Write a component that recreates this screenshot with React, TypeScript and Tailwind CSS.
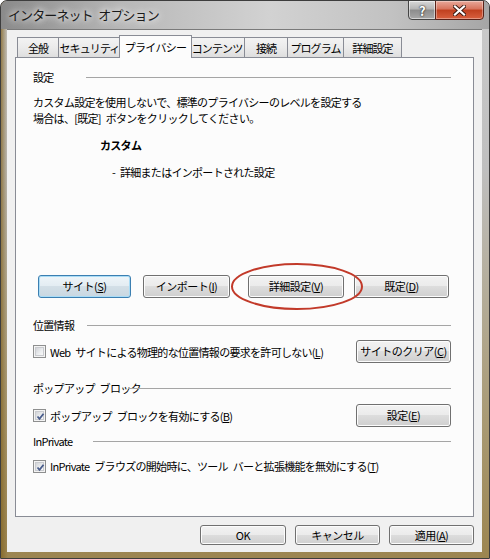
import React from 'react';

const Btn: React.FC<{ w: string; focus?: boolean; h?: string; children: React.ReactNode }> = ({ w, focus, h = 'h-[23px]', children }) => (
  <button
    className={
      focus
        ? `${w} ${h} shrink-0 whitespace-nowrap rounded-[3px] border border-[#3c7fb1] bg-[linear-gradient(180deg,#eef5f9_0%,#e3ecf2_49%,#d3dfe7_50%,#c9d7e1_100%)] shadow-[inset_0_0_0_1px_#a9dcf6] text-[11px] tracking-[-0.5px] text-black leading-none`
        : `${w} ${h} shrink-0 whitespace-nowrap rounded-[3px] border border-[#707070] bg-[linear-gradient(180deg,#f2f2f2_0%,#ebebeb_49%,#dddddd_50%,#cfcfcf_100%)] shadow-[inset_0_0_0_1px_#fcfcfc] text-[11px] tracking-[-0.5px] text-black leading-none`
    }
  >
    {children}
  </button>
);

const Check: React.FC<{ checked?: boolean }> = ({ checked }) => (
  <span className="w-[13px] h-[13px] shrink-0 border border-[#8e8f8f] bg-[#f4f4f4] p-[1px] flex">
    <span className="flex-1 border border-[#c9cbcf] bg-[linear-gradient(135deg,#d2d4d8_0%,#eceef0_60%,#f8f8f8_100%)] relative">
      {checked && (
        <svg width="9" height="9" viewBox="0 0 9 9" className="absolute left-0 top-0">
          <polyline points="1.5,4.5 3.5,6.8 7.5,1.8" fill="none" stroke="#4a5d8c" strokeWidth="1.8" />
        </svg>
      )}
    </span>
  </span>
);

const GroupHead: React.FC<{ label: string; w: string; mt: string }> = ({ label, w, mt }) => (
  <div className={`flex items-center h-[16px] ${mt}`}>
    <span className={`${w} shrink-0 whitespace-nowrap`}>{label}</span>
    <span className="flex-1 h-px bg-[#a5a5a5]" />
  </div>
);

const tabs = [
  { label: '全般', w: 'w-[42px]' },
  { label: 'セキュリティ', w: 'w-[62px]' },
  { label: 'プライバシー', w: 'w-[73px]', active: true },
  { label: 'コンテンツ', w: 'w-[55px]' },
  { label: '接続', w: 'w-[43px]' },
  { label: 'プログラム', w: 'w-[56px]' },
  { label: '詳細設定', w: 'w-[58px]' },
];

// en space keeps the gaps close to the original's width
const SP = '\u2002';

export default function App() {
  return (
    <div className="relative w-[490px] h-[559px] overflow-hidden rounded-t-[7px] border border-[#3d3d3d] flex flex-col font-['Noto_Sans_CJK_JP',sans-serif] text-[11px] tracking-[-0.7px] text-black bg-[linear-gradient(90deg,rgba(130,100,35,0.75)_0px,rgba(130,100,35,0)_7px),linear-gradient(180deg,#a4a4a4_0%,#c9c9c9_4%,#bfbfbf_30%,#a99a74_75%,#9c8550_100%)]">
      {/* title bar */}
      <div className="h-[28px] shrink-0 flex items-start justify-between pl-[7px] pr-[5px] bg-[linear-gradient(90deg,#8a8a8a_0%,#b8b8b8_25%,#d2d2d2_55%,#c2c2c2_80%,#a6a6a6_100%)]">
        <span className="mt-[5px] h-[18px] leading-[18px] text-[13px] tracking-[-0.9px] text-[#1a1a1a] [text-shadow:0_0_6px_#ffffff,0_0_10px_#ffffff]">
          インターネット{SP}オプション
        </span>
        <div className="flex -mt-px">
          <div className="w-[28px] h-[20px] rounded-bl-[4px] border border-[#454545] bg-[linear-gradient(180deg,#d8d8d8_0%,#b4b4b4_45%,#8c8c8c_50%,#a8a8a8_100%)] shadow-[inset_0_0_0_1px_rgba(255,255,255,0.5)] flex items-center justify-center">
            <span className="text-[13px] font-bold text-white leading-none [text-shadow:0_0_2px_#222,0_0_1px_#222]">?</span>
          </div>
          <div className="w-[49px] h-[20px] -ml-px rounded-br-[4px] border border-[#5a2218] bg-[linear-gradient(180deg,#e8a89a_0%,#d7735c_45%,#c0401f_50%,#d8603f_100%)] shadow-[inset_0_0_0_1px_rgba(255,255,255,0.35)] flex items-center justify-center">
            <svg width="13" height="11" viewBox="0 0 13 11">
              <path d="M2 1.5 L11 9.5 M11 1.5 L2 9.5" stroke="#3a1a12" strokeWidth="4" strokeLinecap="square" />
              <path d="M2 1.5 L11 9.5 M11 1.5 L2 9.5" stroke="#ffffff" strokeWidth="2.2" strokeLinecap="square" />
            </svg>
          </div>
        </div>
      </div>

      {/* client */}
      <div className="ml-[6px] mr-[7px] h-[523px] shrink-0 bg-[#f0f0f0] border-t border-[#7a7a7a] flex flex-col px-[8px] pt-[5px]">
        <div className="h-[22px] flex items-end pl-[2px]">
          {tabs.map((t) =>
            t.active ? (
              <div
                key={t.label}
                className={`${t.w} h-[23px] -mb-px -mx-[2px] relative z-10 whitespace-nowrap border border-b-0 border-[#898c95] bg-[#fcfcfc] flex items-start justify-center pt-[3px] leading-[16px]`}
              >
                {t.label}
              </div>
            ) : (
              <div
                key={t.label}
                className={`${t.w} h-[20px] shrink-0 whitespace-nowrap tracking-[-0.9px] border border-b-0 border-l-0 first:border-l border-[#898c95] bg-[linear-gradient(180deg,#f3f3f3_0%,#ebebeb_50%,#dedede_100%)] flex items-center justify-center leading-[16px]`}
              >
                {t.label}
              </div>
            )
          )}
        </div>

        <div className="h-[460px] shrink-0 border border-[#898c95] bg-[#fcfcfc] pl-[17px] pr-[22px] flex flex-col">
          <GroupHead label="設定" w="w-[53px]" mt="mt-[11px]" />
          <div className="mt-[9px] leading-[16px]">
            <div>カスタム設定を使用しないで、標準のプライバシーのレベルを設定する</div>
            <div>場合は、[既定]{SP}ボタンをクリックしてください。</div>
          </div>
          <div className="mt-[11px] h-[16px] leading-[16px] pl-[67px] font-bold">カスタム</div>
          <div className="mt-[11px] h-[16px] leading-[16px] pl-[79px]">-{SP}詳細またはインポートされた設定</div>

          <div className="mt-[95px] flex">
            <div className="ml-[5px]">
              <Btn w="w-[93px]" focus>
                サイト(<u>S</u>)
              </Btn>
            </div>
            <div className="ml-[12px]">
              <Btn w="w-[87px]">
                インポート(<u>I</u>)
              </Btn>
            </div>
            <div className="ml-[18px]">
              <Btn w="w-[96px]">
                詳細設定(<u>V</u>)
              </Btn>
            </div>
            <div className="ml-[10px]">
              <Btn w="w-[95px]">
                既定(<u>D</u>)
              </Btn>
            </div>
          </div>

          <GroupHead label="位置情報" w="w-[54px]" mt="mt-[19px]" />
          <div className="mt-[7px] flex items-center justify-between">
            <div className="flex items-center gap-[4px]">
              <Check />
              <span className="leading-[16px] whitespace-nowrap">
                Web{SP}サイトによる物理的な位置情報の要求を許可しない(<u>L</u>)
              </span>
            </div>
            <Btn w="w-[95px]">
              サイトのクリア(<u>C</u>)
            </Btn>
          </div>

          <GroupHead label={`ポップアップ${SP}ブロック`} w="w-[95px]" mt="mt-[17px]" />
          <div className="mt-[8px] flex items-center justify-between">
            <div className="flex items-center gap-[4px]">
              <Check checked />
              <span className="leading-[16px] whitespace-nowrap">
                ポップアップ{SP}ブロックを有効にする(<u>B</u>)
              </span>
            </div>
            <Btn w="w-[95px]">
              設定(<u>E</u>)
            </Btn>
          </div>

          <GroupHead label="InPrivate" w="w-[60px]" mt="mt-[6px]" />
          <div className="mt-[9px] flex items-center gap-[4px]">
            <Check checked />
            <span className="leading-[16px] whitespace-nowrap">
              InPrivate{SP}ブラウズの開始時に、ツール{SP}バーと拡張機能を無効にする(<u>T</u>)
            </span>
          </div>
        </div>

        <div className="mt-[8px] flex justify-end gap-[9px]">
          <Btn w="w-[86px]" h="h-[20px]">OK</Btn>
          <Btn w="w-[85px]" h="h-[20px]">キャンセル</Btn>
          <Btn w="w-[85px]" h="h-[20px]">
            適用(<u>A</u>)
          </Btn>
        </div>
      </div>

      {/* hand-drawn highlight */}
      <svg className="absolute left-[229px] top-[261px]" width="134" height="49" viewBox="0 0 134 49">
        <ellipse cx="67" cy="24.5" rx="65" ry="22.5" fill="none" stroke="#c23a2a" strokeWidth="2" />
      </svg>
    </div>
  );
}
